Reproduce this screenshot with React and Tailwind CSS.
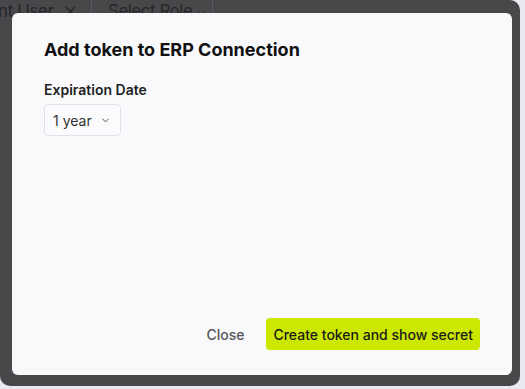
import { ChevronDown, X } from 'lucide-react'

export default function App() {
  return (
    <div className="w-[525px] h-[389px] bg-[#e9e9f1] font-['Inter',sans-serif]">
      <div className="relative w-[520px] h-[386px] bg-[#48484b] rounded-tr-[10px] rounded-b-[10px] overflow-hidden">
        {/* dimmed page behind the dialog */}
        <div className="flex items-stretch h-[13px] text-[#262628] text-[17px] leading-none">
          <div className="flex items-start gap-[8px] -ml-[2px] pt-[3px] w-[94px] border-r border-[#5a5a5e]">
            <span className="tracking-[-0.4px]">nt User</span>
            <X size={17} strokeWidth={2} />
          </div>
          <div className="flex items-start gap-[3px] pl-[16px] pt-[3px] w-[121px] border-r border-[#5a5a5e]">
            <span className="tracking-[-0.5px]">Select Role</span>
            <ChevronDown size={12} strokeWidth={2} className="mt-[4px]" />
          </div>
        </div>

        {/* dialog */}
        <div className="absolute left-[12px] top-[13px] w-[500px] h-[362px] bg-[#f9f9fc] rounded-[6px] flex flex-col px-8 pt-[24px] pb-[25px]">
          <h2 className="text-[18px] font-bold text-[#111] leading-[26px]">Add token to ERP Connection</h2>
          <label className="mt-[17px] text-[14px] font-semibold text-[#222] leading-5">Expiration Date</label>
          <button className="mt-[4px] self-start flex items-center gap-[8px] h-[32px] pl-[8px] pr-[9px] border border-[#e1e1ea] rounded-[4px] bg-[#fbfbfd] text-[14px] text-[#333]">
            <span>1 year</span>
            <ChevronDown size={11} strokeWidth={2} className="text-[#444]" />
          </button>
          <div className="flex-1" />
          <div className="flex items-center justify-end gap-[22px]">
            <button className="text-[14px] font-medium text-[#555]">Close</button>
            <button className="h-[32px] px-[7px] rounded-[4px] bg-[#cde800] text-[14px] font-medium text-[#1a1a1a]">
              Create token and show secret
            </button>
          </div>
        </div>
      </div>
    </div>
  )
}
